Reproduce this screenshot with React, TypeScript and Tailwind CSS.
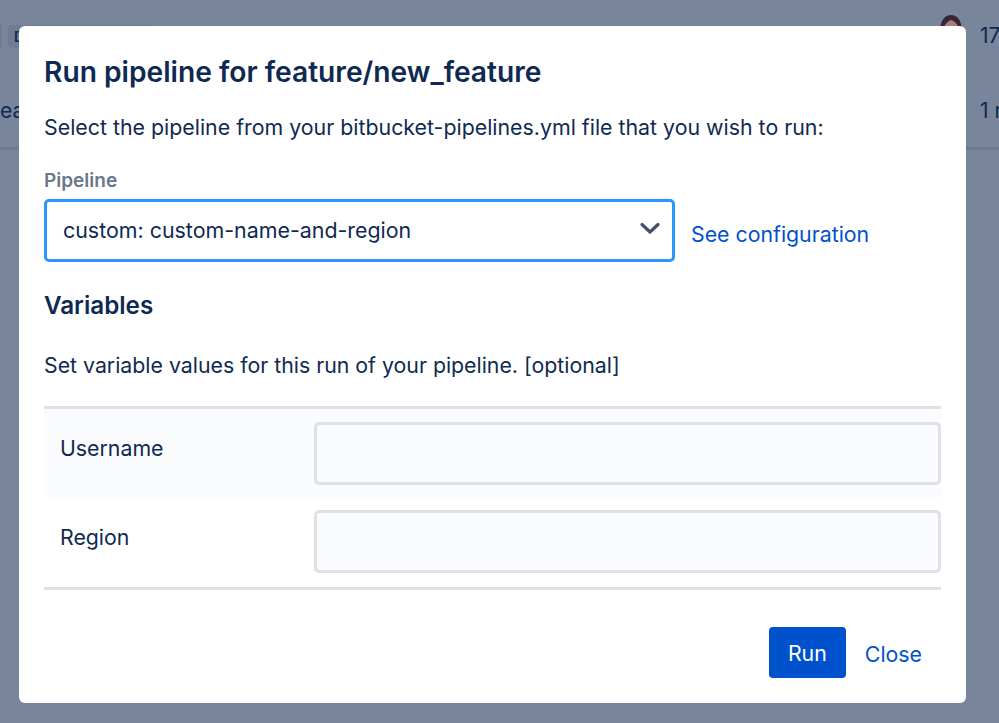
export default function App() {
  return (
    <div className="relative w-[999px] h-[723px] overflow-hidden bg-[#78859b] text-[#172b4d] font-['Inter','Liberation_Sans',sans-serif]">
      {/* Dimmed page behind the dialog */}
      <div className="flex h-[71px] items-start justify-between border-b border-[#74819a] pt-[25px]">
        <div className="flex gap-[6px]">
          <div className="h-[23px] w-[2px] rounded-r-[3px] bg-[#6f7c93]" />
          <div className="flex h-[23px] w-[146px] items-center rounded-[3px] bg-[#6f7c93] pl-[6px] text-[14px] font-semibold leading-none text-[#0f2a52]">
            D
          </div>
        </div>
        <div className="flex w-[59px] shrink-0 items-start gap-[18px]">
          <svg width="22" height="32" viewBox="0 0 22 32" className="mt-[-10px] shrink-0">
            <path d="M0 14C1 5 5 0 11 0s10 5 11 14v18H0z" fill="#3a2630" />
            <path d="M4 12c2-4 4-6 7-7 3 1 6 3 7 7v20H4z" fill="#a57f7c" />
          </svg>
          <span className="mt-[1px] shrink-0 whitespace-nowrap text-[21px] leading-[20px] text-[#0f2a52]">17</span>
        </div>
      </div>
      <div className="flex h-[79px] items-center justify-between border-b-[3px] border-[#6d7a90] pt-[3px] text-[21px] text-[#0f2a52]">
        <span>ea</span>
        <span className="w-[19px] shrink-0 whitespace-nowrap">1 r</span>
      </div>

      {/* Dialog */}
      <div className="absolute left-[19px] top-[26px] flex h-[677px] w-[947px] flex-col rounded-[6px] bg-white px-[25px] text-[#0f2a52]">
        <h1 className="mt-[26px] text-[28.2px] font-semibold leading-[40px]">
          Run pipeline for feature/new_feature
        </h1>
        <p className="mt-[20px] text-[21.35px] leading-[30px]">
          Select the pipeline from your bitbucket-pipelines.yml file that you wish to run:
        </p>
        <label className="mt-[27px] text-[19px] font-semibold leading-[24px] text-[#6b778c]">Pipeline</label>
        <div className="mt-[6px] flex items-center">
          <div className="flex h-[63px] w-[631px] items-center justify-between rounded-[5px] border-[3px] border-[#2a97ff] pl-[16px] pr-[10px]">
            <span className="text-[21.4px]">custom: custom-name-and-region</span>
            <svg width="24" height="24" viewBox="0 0 24 24" fill="none" className="mt-[-4px]">
              <path d="M4 7.5 12 15l8-7.5" stroke="#42526e" strokeWidth="3.2" strokeLinecap="round" strokeLinejoin="round" />
            </svg>
          </div>
          <a className="ml-[16px] mt-[9px] text-[21.3px] text-[#0052cc]">See configuration</a>
        </div>
        <h2 className="mt-[26px] text-[24.2px] font-semibold leading-[36px]">Variables</h2>
        <p className="mt-[26px] text-[21.3px] leading-[30px]">Set variable values for this run of your pipeline. [optional]</p>
        <div className="mt-[26px] w-[897px] border-y-[3px] border-[#dfe1e6]">
          <div className="flex h-[88px] items-start bg-[#fafbfc] pt-[13px]">
            <span className="w-[270px] pl-[16px] pt-[11px] text-[21.3px] leading-[30px]">Username</span>
            <div className="h-[63px] w-[627px] rounded-[5px] border-[3px] border-[#dfe1e6] bg-[#fafbfc]" />
          </div>
          <div className="flex h-[90px] items-start bg-white pt-[13px]">
            <span className="w-[270px] pl-[16px] pt-[12px] text-[21.3px] leading-[30px]">Region</span>
            <div className="h-[63px] w-[627px] rounded-[5px] border-[3px] border-[#dfe1e6] bg-[#fafbfc]" />
          </div>
        </div>
        <div className="mt-[37px] flex items-center justify-end pr-[19px]">
          <button className="h-[51px] w-[77px] rounded-[4px] bg-[#0052cc] pt-[2px] text-[21.3px] text-white">Run</button>
          <a className="ml-[19px] mt-[4px] text-[21.3px] text-[#0052cc]">Close</a>
        </div>
      </div>
    </div>
  );
}
